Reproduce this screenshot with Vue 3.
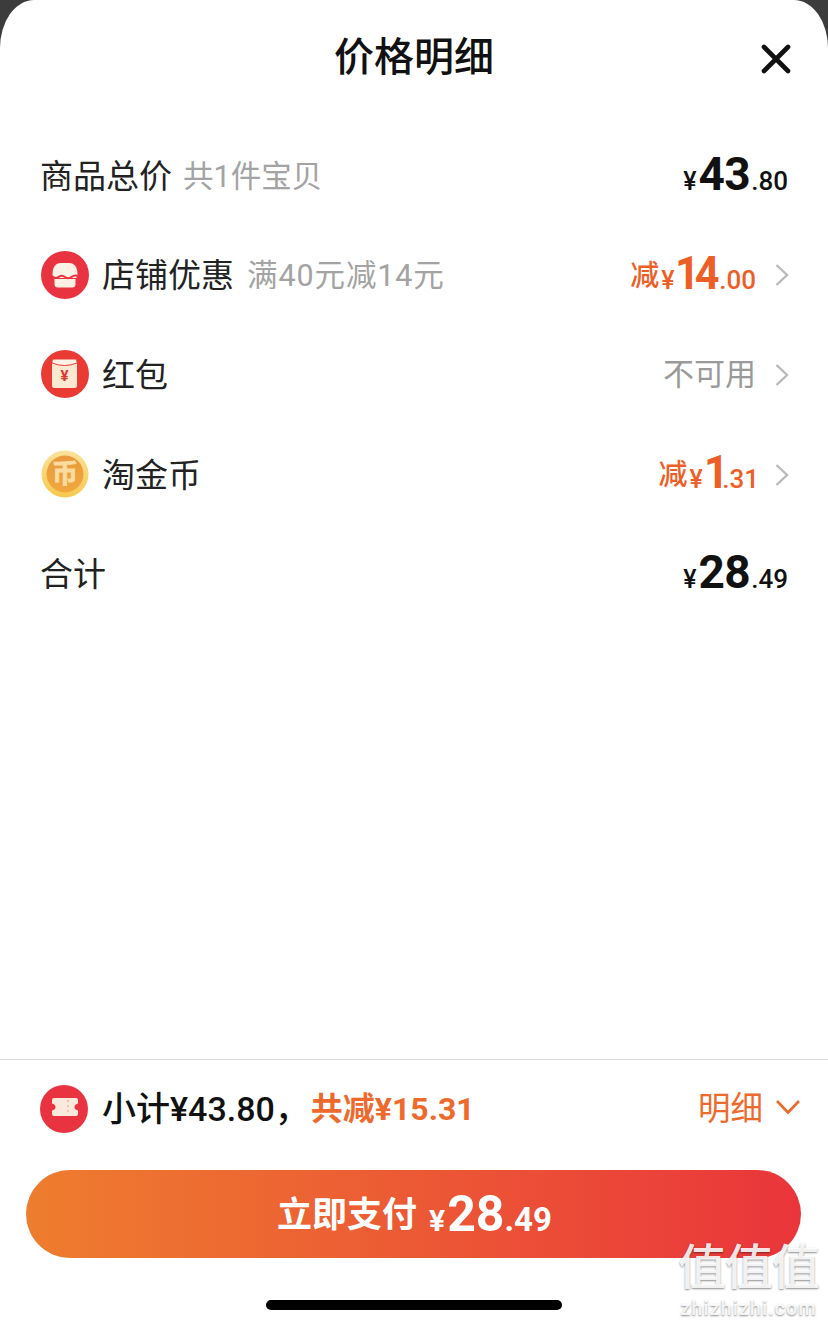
<script setup>
const rows = [
  { id: 'shop', label: '店铺优惠', sub: '满40元减14元', icon: 'shop', int: '14', dec: '.00' },
  { id: 'packet', label: '红包', icon: 'packet', none: '不可用' },
  { id: 'coin', label: '淘金币', icon: 'coin', int: '1', dec: '.31' },
]
</script>

<template>
  <div class="page">
    <div class="sheet">
      <header class="head">
        <h1>价格明细</h1>
        <svg class="close" width="32" height="32" viewBox="0 0 32 32">
          <path d="M4 4 L28 28 M28 4 L4 28" stroke="#111" stroke-width="4.6" stroke-linecap="round" fill="none" />
        </svg>
      </header>

      <div class="list">
        <div class="row">
          <div class="left">
            <span class="label">商品总价</span>
            <span class="sub first">共1件宝贝</span>
          </div>
          <div class="price"><i>¥</i><b>43</b><em>.80</em></div>
        </div>

        <div v-for="r in rows" :key="r.id" class="row">
          <div class="left">
            <svg v-if="r.icon === 'shop'" class="ico" viewBox="0 0 48 48">
              <circle cx="24" cy="24" r="24" fill="#ea3341" />
              <path d="M11.5 24 Q11.5 12 20 12 H28 Q36.5 12 36.5 24 Q36.5 27 34 27 H14 Q11.5 27 11.5 24 Z" fill="#fdf0e4" />
              <path d="M13.5 28 H34.5 V33 Q34.5 36.5 31 36.5 H17 Q13.5 36.5 13.5 33 Z" fill="#fdf0e4" />
              <path d="M11 25 Q14 28.5 17.5 26 T24 26 T30.5 26 T37 25" stroke="#ea3341" stroke-width="2" fill="none" />
            </svg>
            <svg v-else-if="r.icon === 'packet'" class="ico" viewBox="0 0 48 48">
              <circle cx="24" cy="24" r="24" fill="#e93a34" />
              <rect x="11" y="9" width="25" height="29" rx="2.5" fill="#fbe9d2" />
              <path d="M11 11 Q11 9 13 9 H34 Q36 9 36 11 V13 Q23.5 18 11 13 Z" fill="#fbf3e8" stroke="#e93a34" stroke-width="1" />
              <text x="23.5" y="31" class="yen-mark" text-anchor="middle">¥</text>
            </svg>
            <svg v-else class="ico" viewBox="0 0 48 48">
              <defs>
                <linearGradient id="coinEdge" x1="0" y1="0" x2="0" y2="1">
                  <stop offset="0" stop-color="#fbe39a" />
                  <stop offset="1" stop-color="#f8c84e" />
                </linearGradient>
                <linearGradient id="coinFace" x1="0" y1="0" x2="0" y2="1">
                  <stop offset="0" stop-color="#e99a3c" />
                  <stop offset="1" stop-color="#f0a83e" />
                </linearGradient>
              </defs>
              <circle cx="24" cy="24" r="23.5" fill="url(#coinEdge)" />
              <circle cx="24" cy="24" r="18.5" fill="url(#coinFace)" />
              <text x="24" y="32.5" class="coin-mark" text-anchor="middle">币</text>
            </svg>
            <span class="label">{{ r.label }}</span>
            <span v-if="r.sub" class="sub wide">{{ r.sub }}</span>
          </div>
          <div class="right">
            <span v-if="r.none" class="none">{{ r.none }}</span>
            <div v-else class="price cut" :class="{ single: r.int.length === 1 }">
              <span class="jian">减</span><i>¥</i><b>{{ r.int }}</b><em>{{ r.dec }}</em>
            </div>
            <svg class="chev" width="16" height="24" viewBox="0 0 16 24">
              <path d="M2.5 2 L13 12 L2.5 22" stroke="#b9b9b9" stroke-width="2.4" fill="none" />
            </svg>
          </div>
        </div>

        <div class="row">
          <div class="left"><span class="label">合计</span></div>
          <div class="price"><i>¥</i><b>28</b><em>.49</em></div>
        </div>
      </div>

      <footer class="foot">
        <div class="summary">
          <div class="left">
            <svg class="ico tick" viewBox="0 0 48 48">
              <circle cx="24" cy="24" r="24" fill="#ea3341" />
              <path d="M14 13 H36 Q38 13 38 15 V18.5 Q34.5 19.5 34.5 22 Q34.5 24.5 38 25.5 V29 Q38 31 36 31 H14 Q12 31 12 29 V25.5 Q15.5 24.5 15.5 22 Q15.5 19.5 12 18.5 V15 Q12 13 14 13 Z" fill="#fbe9dc" />
              <path d="M28 15 V30" stroke="#f3bfae" stroke-width="2" stroke-dasharray="2 3" />
            </svg>
            <span class="sum-text">小计¥43.80，</span>
            <span class="sum-cut">共减¥15.31</span>
          </div>
          <div class="detail">
            <span>明细</span>
            <svg width="26" height="16" viewBox="0 0 26 16">
              <path d="M2 2 L13 13.5 L24 2" stroke="#ee6a2c" stroke-width="2.6" fill="none" />
            </svg>
          </div>
        </div>

        <div class="pay">
          <span class="pay-text">立即支付</span>
          <i>¥</i><b>28</b><em>.49</em>
        </div>

        <div class="home"></div>
      </footer>
    </div>

    <div class="mark">
      <span class="mark-cn">值值值</span>
      <span class="mark-en">zhizhizhi.com</span>
    </div>
  </div>
</template>

<style>
html,
body {
  margin: 0;
  background: #3c3c3c;
}
</style>

<style scoped>
.page {
  position: relative;
  width: 828px;
  height: 1326px;
  overflow: hidden;
  background: #3c3c3c;
  font-family: "Roboto", "Noto Sans CJK SC", sans-serif;
  color: #111;
}
.sheet {
  height: 100%;
  display: flex;
  flex-direction: column;
  background: #fff;
  border-radius: 34px 34px 0 0 / 48px 48px 0 0;
}
.head {
  position: relative;
  height: 124px;
  padding-top: 10px;
  box-sizing: border-box;
  display: flex;
  justify-content: center;
}
.head h1 {
  margin: 0;
  font-size: 40px;
  line-height: 96px;
  height: 96px;
  font-weight: 500;
}
.close {
  position: absolute;
  right: 36px;
  top: 43px;
}
.list {
  flex: 1;
}
.row {
  height: 99.6px;
  padding: 0 40px;
  display: flex;
  align-items: center;
  justify-content: space-between;
}
.left {
  display: flex;
  align-items: center;
}
.label {
  font-size: 33px;
  color: #222;
}
.sub {
  margin-left: 13px;
  font-size: 30.5px;
  color: #a3a3a3;
}
.sub.first {
  margin-left: 11px;
}
.sub.wide {
  letter-spacing: 0.9px;
}
.ico {
  width: 48px;
  height: 48px;
  margin-top: 3px;
  margin-left: 1px;
  margin-right: 13px;
  flex-shrink: 0;
}
.ico.tick {
  margin-top: 0;
  margin-left: 0;
  margin-right: 14px;
}
.yen-mark {
  font-size: 15px;
  font-weight: 700;
  fill: #d9392f;
}
.coin-mark {
  font-size: 26px;
  font-weight: 700;
  fill: #fbdca0;
  stroke: #fbdca0;
  stroke-width: 0.8;
}
.right {
  display: flex;
  align-items: center;
}
.price {
  display: flex;
  align-items: baseline;
  color: #111;
}
.price i {
  font-style: normal;
  font-size: 25px;
  font-weight: 500;
  margin-right: 2px;
}
.price b {
  font-size: 46px;
  font-weight: 700;
  line-height: 1;
  letter-spacing: -0.5px;
}
.price em {
  font-style: normal;
  font-size: 26px;
  font-weight: 500;
  margin-left: 1px;
}
.cut {
  color: #ee5f28;
}
.cut i {
  margin-right: 1px;
}
.cut b {
  letter-spacing: -5.5px;
  margin-right: 1px;
  transform: scaleX(0.94);
  transform-origin: left;
}
.cut.single {
  margin-right: -3px;
}
.cut.single b {
  letter-spacing: -11px;
  margin-right: 0;
}
.cut.single em {
  margin-left: 3px;
}
.jian {
  font-size: 29px;
  font-weight: 500;
  margin-right: 2px;
  transform: translateY(-3px);
}
.none {
  font-size: 31px;
  color: #9a9a9a;
  margin-bottom: 2px;
}
.chev {
  margin-top: 4px;
  margin-left: 18px;
  margin-right: -2px;
}
.foot {
  height: 267px;
  box-sizing: border-box;
  border-top: 1px solid #dcdcdc;
  display: flex;
  flex-direction: column;
  padding: 0 27px 0 26px;
}
.summary {
  height: 98px;
  margin-bottom: 12px;
  display: flex;
  align-items: center;
  justify-content: space-between;
  padding-left: 14px;
}
.sum-text {
  font-size: 34px;
  font-weight: 500;
  color: #111;
  margin-bottom: 6px;
}
.sum-cut {
  margin-left: 2px;
  margin-bottom: 6px;
  font-size: 32px;
  font-weight: 700;
  color: #ee6a2c;
}
.detail {
  display: flex;
  align-items: center;
  gap: 12px;
  font-size: 32.5px;
  color: #ee6a2c;
}
.detail span {
  margin-bottom: 8px;
}
.detail svg {
  margin-bottom: 4px;
}
.pay {
  height: 88px;
  box-sizing: border-box;
  padding-left: 2px;
  border-radius: 44px;
  background: linear-gradient(90deg, #ee7d2e 0%, #ea353b 100%);
  display: flex;
  align-items: baseline;
  justify-content: center;
  color: #fff;
  line-height: 88px;
}
.pay-text {
  font-size: 35px;
  font-weight: 700;
  margin-right: 12px;
  transform: translateY(-4px);
}
.pay i {
  font-style: normal;
  font-size: 30px;
  font-weight: 700;
  margin-right: 2px;
}
.pay b {
  font-size: 50px;
  font-weight: 700;
}
.pay em {
  font-style: normal;
  font-size: 33px;
  font-weight: 700;
}
.home {
  align-self: center;
  width: 296px;
  height: 10px;
  margin-top: 42px;
  border-radius: 5px;
  background: #000;
}
.mark {
  position: absolute;
  right: 9px;
  bottom: 6px;
  display: flex;
  flex-direction: column;
  align-items: center;
  color: rgba(255, 255, 255, 0.9);
  text-shadow: 0 1px 2px rgba(0, 0, 0, 0.45);
}
.mark-cn {
  font-size: 48px;
  font-weight: 500;
  line-height: 56px;
  letter-spacing: -1px;
}
.mark-en {
  font-size: 20px;
  font-weight: 500;
  line-height: 24px;
  letter-spacing: 1px;
}
</style>
